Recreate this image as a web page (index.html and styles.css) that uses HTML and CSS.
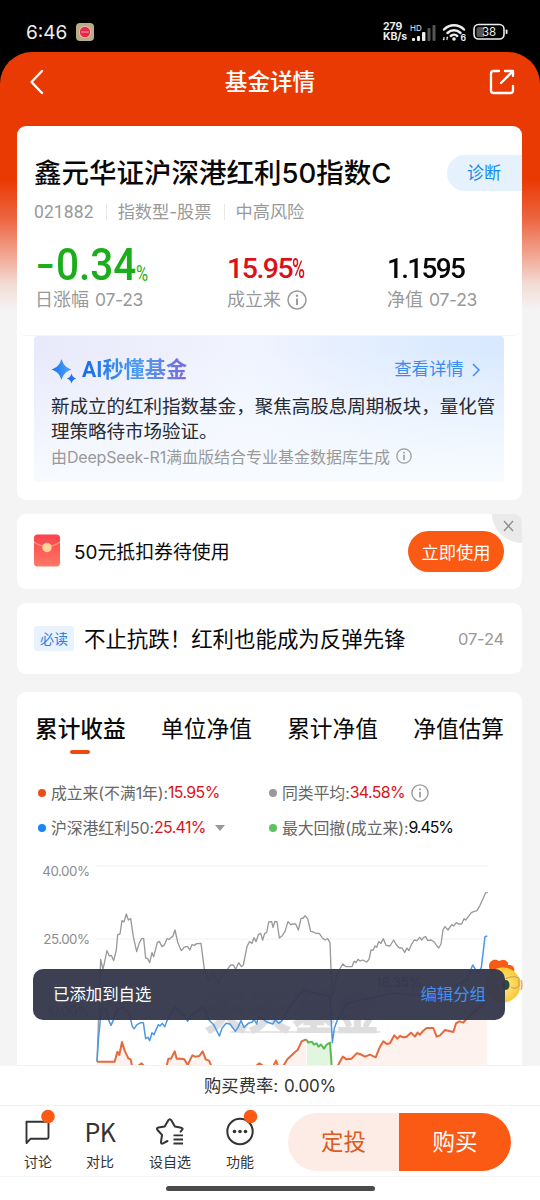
FILE: index.html
```html
<!DOCTYPE html>
<html lang="zh-CN">
<head>
<meta charset="utf-8">
<title>基金详情</title>
<link rel="stylesheet" href="styles.css">
</head>
<body>
<div class="status">
  <span class="clock">6:46</span>
  <svg class="app-icon" viewBox="0 0 18 18"><rect width="18" height="18" rx="4" fill="#b9ad85"/><circle cx="9" cy="9" r="6" fill="#f5c8b8"/><circle cx="9" cy="9" r="5.2" fill="#e8284a"/><path d="M5.5 9h7" stroke="#f39aa8" stroke-width="1.6" stroke-dasharray="1.4 .5"/></svg>
  <span class="speed"><span>279</span><span>KB/s</span></span>
  <svg class="signal" viewBox="0 0 26 20"><g fill="#eee"><rect x="2" y="14" width="3" height="3" rx="1"/><rect x="7" y="12" width="3" height="5" rx="1"/><rect x="12" y="8" width="3.4" height="9" rx="1"/></g><g fill="#555"><rect x="17.5" y="4" width="3" height="13" rx="1"/><rect x="22.5" y="1" width="3" height="16" rx="1"/></g><text x="0" y="7" class="hd">HD</text></svg>
  <svg class="wifi" viewBox="0 0 24 20"><g fill="none" stroke="#eee" stroke-width="2.5" stroke-linecap="round"><path d="M2 7.5a14 14 0 0 1 20 0"/><path d="M5.5 11a9.3 9.3 0 0 1 13 0"/><path d="M8.8 14a4.6 4.6 0 0 1 6.4 0"/></g><circle cx="12" cy="17" r="1.8" fill="#eee"/><path d="M2 15v3m0 0-1-1M5 18v-3m0 0 1 1" stroke="#eee" stroke-width="1.1"/><text x="18.5" y="18.5" class="six">6</text></svg>
  <svg class="battery" viewBox="0 0 36 18"><rect x="1" y="1.5" width="30" height="14.5" rx="4.5" fill="none" stroke="#eee" stroke-width="1.6"/><path d="M6 4h5v10H6a2.500 2.500 0 0 1-2.500-2.500v-5A2.500 2.500 0 0 1 6 4z" fill="#555"/><rect x="32.700" y="6.500" width="1.800" height="4.500" rx=".8" fill="#eee"/><text x="16" y="13" text-anchor="middle" class="bat">38</text></svg>
</div>
<div class="app">
  <header class="header">
    <svg class="back" viewBox="0 0 16 26"><path d="M13 2 2.500 13 13 24" fill="none" stroke="#fff" stroke-width="2.400" stroke-linecap="round" stroke-linejoin="round"/></svg>
    <h1>基金详情</h1>
    <svg class="share" viewBox="0 0 26 26"><path d="M10 2H4.500A2.500 2.500 0 0 0 2 4.500v17A2.500 2.500 0 0 0 4.500 24h17a2.500 2.500 0 0 0 2.500-2.500V17M16 2h8v5M24 2 12 14" fill="none" stroke="#fff" stroke-width="2.300" stroke-linecap="round" stroke-linejoin="round"/></svg>
  </header>
  <main class="main">
    <section class="card fund">
      <div class="summary">
        <div class="name-row"><h2>鑫元华证沪深港红利50指数C</h2><span class="diagnose">诊断</span></div>
        <div class="meta"><b>021882</b><i></i><span>指数型<em>-</em>股票</span><i></i><span>中高风险</span></div>
        <div class="stats">
          <div class="stat s1"><div class="big"><span class="dash">-</span><span class="digits">0.34</span><small>%</small></div><div class="label">日涨幅<span class="num">07-23</span></div></div>
          <div class="stat s2"><div class="value red">15.95<span class="pct">%</span></div><div class="label">成立来<svg class="info" viewBox="0 0 20 20"><use href="#info"/></svg></div></div>
          <div class="stat"><div class="value nav">1.1595</div><div class="label">净值<span class="num">07-23</span></div></div>
        </div>
      </div>
      <div class="ai">
        <div class="ai-head">
          <svg class="spark" viewBox="0 0 26 25"><defs><linearGradient id="sg" x1="0" x2="1"><stop stop-color="#1475ef"/><stop offset="1" stop-color="#53a4ff"/></linearGradient></defs><path d="M10.500 0C12.500 6 15 8.500 20.500 10.500 15 12.500 12.500 15 10.500 21 8.500 15 6 12.500 .5 10.500 6 8.500 8.500 6 10.500 0z" fill="url(#sg)"/><path d="M20.500 14.500c1 3.200 2 4 4.800 5-2.800 1-3.800 1.900-4.800 5-1-3.100-2-4-4.800-5 2.800-1 3.800-1.800 4.800-5z" fill="#2472ea"/></svg>
          <strong>AI秒懂基金</strong><span class="more">查看详情</span>
          <svg class="chev" viewBox="0 0 8 14"><path d="m1 1 6 6-6 6" fill="none" stroke="#3b8cf2" stroke-width="1.500"/></svg>
        </div>
        <p>新成立的红利指数基金，聚焦高股息周期板块，量化管<br>理策略待市场验证。</p>
        <div class="source"><span>由<span class="ds">DeepSeek-R1</span>满血版结合专业基金数据库生成</span><svg class="info" viewBox="0 0 20 20"><use href="#info"/></svg></div>
      </div>
    </section>
    <section class="card coupon">
      <svg class="packet" viewBox="0 0 26 33"><defs><linearGradient id="pg" x2="0" y2="1"><stop stop-color="#fb414d"/><stop offset="1" stop-color="#ff7864"/></linearGradient></defs><rect y=".5" width="26" height="32" rx="3.500" fill="url(#pg)"/><path d="M0 8q13 9 26 0" fill="none" stroke="#ff9b7c" stroke-width="1.200"/><circle cx="13" cy="13.500" r="4.700" fill="#ffd596"/></svg>
      <span class="coupon-text">50元抵扣券待使用</span>
      <button>立即使用</button>
      <svg class="close" viewBox="0 0 30 29"><path d="M0 0h22a8 8 0 0 1 8 8v21C14 29 0 16 0 0z" fill="#eaeaea"/><path d="m12 7 9 10M21 7l-9 10" stroke="#8c8c8c" stroke-width="1.300"/></svg>
    </section>
    <section class="card article"><span class="tag">必读</span><span class="headline">不止抗跌！红利也能成为反弹先锋</span><time>07-24</time></section>
    <section class="card perf">
      <nav class="tabs"><span class="on">累计收益</span><span>单位净值</span><span>累计净值</span><span>净值估算</span></nav>
      <div class="legend">
        <div><i class="dot or"></i>成立来(不满1年):<b class="red">15.95%</b></div>
        <div><i class="dot gy"></i>同类平均:<b class="red">34.58%</b><svg class="info" viewBox="0 0 20 20"><use href="#info"/></svg></div>
        <div><i class="dot bl"></i>沪深港红利50:<b class="red">25.41%</b><i class="caret"></i></div>
        <div><i class="dot gn"></i>最大回撤(成立来):<b>9.45%</b></div>
      </div>
      <svg class="chart" viewBox="51 0 1515 645">
        <path d="M288 48H1462M288 267H1462M288 486H1462" stroke="#f0f0f0" stroke-width="3"/>
        <text class="axis" x="127" y="78" textLength="143">40.00%</text>
        <text class="axis" x="130" y="281" textLength="140">25.00%</text>
        <text class="axis" x="138" y="498" textLength="132">10.00%</text>
        <text class="mark" x="612" y="536" textLength="526" lengthAdjust="spacingAndGlyphs">天天基金</text>
        <path d="M690 546H1140" stroke="#dedede" stroke-width="5"/>
        <text class="axis dark" x="1128" y="412" textLength="138">16.35%</text>
        <path class="fill-or" d="M291 635H344L366 576 396 645H291zM500 645 524 604 553 628 563 645 608 604 634 645zM850 645 885 606 918 568V645zM1013 645 1028 620 1070 610 1127 622 1150 574 1183 556 1233 548 1300 534 1310 560 1335 540 1360 546 1368 520 1400 506 1462 450V645z"/>
        <path class="fill-gn" d="M921 568 942 584 972 596 993 578V645H921z"/>
        <path class="line gray" d="M291 635 302 328 309 358 321 302 328 318 334 316 341 332 349 300 353 254 360 252 366 212 372 216 379 192 385 210 392 206 400 260 410 305 418 278 425 266 431 266 437 324 443 326 449 338 456 308 461 320 472 278 478 274 486 290 493 285 501 266 508 268 513 262 518 260 525 240 534 280 544 302 552 292 558 290 563 290 569 300 576 284 583 286 590 281 603 280 613 358 625 390 640 370 655 400 668 370 684 356 692 345 700 345 707 358 716 338 724 350 730 345 741 290 748 275 756 280 762 263 768 275 775 254 782 250 788 270 794 250 800 248 806 216 815 215 819 232 825 214 831 216 838 264 846 258 855 244 864 215 872 224 878 222 887 222 895 240 903 206 910 204 915 197 923 206 932 244 940 246 948 250 958 250 967 264 975 270 983 266 990 278 993 358 997 440 1010 380 1022 352 1029 342 1038 350 1056 350 1062 334 1068 338 1074 328 1080 333 1088 330 1100 336 1107 328 1113 300 1120 300 1125 288 1130 292 1136 275 1143 280 1150 266 1158 286 1170 288 1181 270 1190 286 1198 294 1206 294 1214 307 1221 294 1226 302 1234 284 1243 270 1251 272 1259 262 1265 270 1271 262 1277 260 1283 272 1293 270 1303 276 1308 284 1316 294 1323 282 1329 240 1335 230 1344 240 1355 224 1361 228 1369 218 1376 222 1385 222 1392 206 1397 210 1408 196 1414 188 1423 184 1431 182 1440 166 1457 128 1463 128"/>
        <path class="line blue" d="M291 635 296 560 305 470 318 478 325 508 333 526 341 508 350 480 370 470 388 490 397 530 403 536 411 524 422 518 430 518 437 566 444 562 449 572 456 548 462 554 475 524 480 528 487 520 494 530 502 510 525 470 545 490 556 500 563 514 569 500 610 470 627 510 641 524 658 558 666 535 678 520 690 522 706 544 714 532 723 512 732 532 745 520 757 516 762 508 770 522 775 500 790 508 800 516 812 520 818 522 826 510 836 520 846 512 870 470 910 420 990 440 997 578 1003 535 1012 510 1040 460 1180 430 1300 440 1400 390 1418 345 1425 356 1435 370 1444 352 1455 260 1462 258"/>
        <path class="line orange" d="M291 635H344L352 605 358 615 366 576 374 602 385 625 392 628 396 648M414 648 425 640 432 648M500 648 505 626 513 626 524 604 530 626 540 626 553 628 563 645 577 616 585 620 598 618 608 604 617 628 627 632 634 648M768 648 778 640 790 648M820 648 828 632 834 648M850 648 862 628 885 606 893 600 905 574 918 568M1013 648 1028 620 1040 628 1055 626 1070 610 1080 612 1095 620 1110 614 1127 622 1140 590 1150 574 1160 582 1170 580 1183 556 1192 566 1200 558 1210 562 1220 560 1233 548 1245 560 1253 548 1260 554 1270 542 1280 534 1300 534 1310 560 1320 556 1335 540 1360 546 1368 520 1378 514 1390 518 1400 506 1430 480 1462 450"/>
        <path class="line green" d="M918 568 925 578 935 575 942 584 950 580 955 590 963 584 972 596 980 584 990 578 995 648"/>
      </svg>
    </section>
  </main>
  <footer class="footer">
    <div class="fee">购买费率: <span>0.00%</span></div>
    <div class="actions">
      <div class="act a1"><svg viewBox="0 0 34 34"><path d="M5.500 8.700h20.500q1.500 0 1.500 1.500v14q0 1.500-1.500 1.500H9.700L5.500 30z" fill="none" stroke="#333" stroke-width="1.900" stroke-linejoin="round"/><circle cx="27" cy="3.500" r="6.800" fill="#fa5a14"/></svg><span>讨论</span></div>
      <div class="act a2"><div class="pk">PK</div><span>对比</span></div>
      <div class="act a3"><svg viewBox="0 0 34 34"><path d="M10 30.400q-2.200 1-2-1.500l1-7L4.500 17q-1.500-2 1-2.500l6.200-1 3.600-6.200q1.500-2.200 3 0l3.600 6.200 6.300 1.200q2.400.6.700 2.500l-1.300 1.500M10 30.400l4.500-2.400" fill="none" stroke="#333" stroke-width="2" stroke-linecap="round" stroke-linejoin="round"/><path d="M20.500 22.300H30M20.500 26.500H30M20.500 30.500H30" stroke="#333" stroke-width="1.800"/></svg><span>设自选</span></div>
      <div class="act a4"><svg viewBox="0 0 34 34"><circle cx="17" cy="18.500" r="12.700" fill="none" stroke="#333" stroke-width="2"/><g fill="#333"><circle cx="11.500" cy="18.500" r="1.800"/><circle cx="17" cy="18.500" r="1.800"/><circle cx="22.500" cy="18.500" r="1.800"/></g><circle cx="27.500" cy="3.500" r="6.800" fill="#fa5a14"/></svg><span>功能</span></div>
      <div class="trade"><span>定投</span><span>购买</span></div>
    </div>
    <div class="home"><i></i></div>
  </footer>
</div>
<svg class="mascot" viewBox="0 0 46 54"><defs><radialGradient id="mg"><stop stop-color="#ffed9a"/><stop offset="1" stop-color="#fac936"/></radialGradient></defs><path d="M8 18C2 7 11 2 16 6c6-3 10 1 9 4 7-1 8 6 4 10z" fill="#f45c17"/><circle cx="20" cy="30" r="17.500" fill="url(#mg)"/><ellipse cx="23" cy="30" rx="3.500" ry="5" fill="#284f35"/><path d="M22 24q8-4 14-1v8q-4 4-8 1" fill="none" stroke="#c79a4a" stroke-width="1"/><path d="M38 25q2 5 0 10" fill="none" stroke="#f5a070" stroke-width="1.500"/></svg>
<div class="toast"><span>已添加到自选</span><span>编辑分组</span></div>
<svg class="symbols"><symbol id="info" viewBox="0 0 20 20"><circle cx="10" cy="10" r="9" fill="none" stroke="currentColor" stroke-width="1.500"/><path d="M10 8.500V15" stroke="currentColor" stroke-width="1.900"/><circle cx="10" cy="5.800" r="1.200" fill="currentColor"/></symbol></svg>
</body>
</html>
```
FILE: styles.css
```css
* { box-sizing: border-box; }
body { margin: 0; width: 540px; height: 1200px; overflow: hidden; position: relative; background: #000; color: #080808; font-family: Inter, "Noto Sans CJK SC", sans-serif; white-space: nowrap; }
h1, h2, p { margin: 0; font-weight: 500; }
svg { display: block; flex: none; }
i, em { font-style: normal; }
.symbols { position: absolute; width: 0; height: 0; }
.red { color: #dc1118; }

.status { height: 52px; display: flex; align-items: center; padding: 12px 31px 0 26px; color: #eee; }
.clock { font-size: 19px; letter-spacing: 0; width: 50px; }
.app-icon { width: 18px; height: 18px; }
.speed { margin-left: auto; width: 27px; font-size: 10.5px; line-height: 10px; font-weight: 700; display: flex; flex-direction: column; letter-spacing: -.1px; }
.signal { width: 26px; height: 20px; margin-top: 3px; }
.hd { font-size: 8px; fill: #eee; }
.wifi { width: 24px; height: 20px; margin-left: 6px; }
.six { font-size: 8.500px; font-weight: 700; fill: #eee; }
.battery { width: 36px; height: 18px; margin-left: 7px; }
.bat { font-size: 11.500px; fill: #eee; }

.app { height: 1148px; border-radius: 32px 32px 0 0; overflow: hidden; display: flex; flex-direction: column; background: linear-gradient(#ea3a04 0, #ea3a04 128px, #ec6440 166px, #f1a48f 202px, #f3dbd5 232px, #f4f4f4 258px); }
.header { height: 74px; flex: none; display: flex; align-items: center; justify-content: space-between; padding: 0 25px 15px 29px; color: #fff; }
.back { width: 16px; height: 26px; }
.share { width: 26px; height: 26px; }
.header h1 { font-size: 22.600px; line-height: 30px; margin-left: 6px; }
.main { flex: 1; min-height: 0; overflow: hidden; padding: 0 18px 0 17px; display: flex; flex-direction: column; }
.card { background: #fff; border-radius: 9px; flex: none; }

.fund { height: 374px; margin-bottom: 14px; overflow: hidden; }
.summary { height: 210px; padding-top: 29px; border-bottom: 1px solid #f5f5f5; border-radius: 9px; }
.name-row { display: flex; height: 36px; align-items: center; justify-content: space-between; padding-left: 17px; }
.name-row h2 { font-size: 27.500px; line-height: 36px; }
.diagnose { width: 75px; height: 36px; border-radius: 18px 0 0 18px; background: #e5f2fe; color: #1688f0; font-size: 17px; line-height: 37px; padding-left: 20px; }
.meta { margin: 10px 0 0 17px; height: 22px; display: flex; align-items: center; color: #999; font-size: 17.200px; line-height: 22px; }
.meta b { font-family: Roboto, sans-serif; font-size: 17.500px; font-weight: 400; letter-spacing: .1px; }
.meta i { width: 1px; height: 16px; background: #e8e8e8; margin: 0 11px 0 12px; }
.stats { display: flex; margin: 20px 0 0 18px; }
.stat { height: 70px; }
.s1 { width: 192px; }
.s2 { width: 160px; }
.big { height: 45px; display: flex; color: #1cad1c; font: 500 45px/44px Roboto, sans-serif; }
.dash { font: 500 44px/43px Inter, sans-serif; width: 21px; }
.digits { width: 79px; transform: scaleX(.9); transform-origin: left; }
.big small { font-size: 22px; font-weight: 400; transform: translate(1px, 9px) scaleX(.75); transform-origin: left; }
.value { height: 45px; font: 500 28.500px/51px Roboto, sans-serif; letter-spacing: -1.500px; }
.nav { letter-spacing: -2px; transform: scaleX(.98); transform-origin: left; }
.nav { letter-spacing: -1.700px; }
.pct { display: inline-block; transform: scaleX(.62); transform-origin: left; }
.label { height: 24px; line-height: 24px; font-size: 18px; color: #999; display: flex; align-items: center; gap: 6px; }
.num { font-size: 17.500px; letter-spacing: -.3px; }
.label .info { width: 20px; height: 20px; }

.ai { width: 470px; height: 146px; margin: 0 0 0 17px; border-radius: 4px; padding: 21px 0 0 17px; background: linear-gradient(to bottom, transparent 10%, #f7fbff 100%), radial-gradient(circle at 100% 0, #d8e8fe, transparent 52%), linear-gradient(90deg, #e8e9fa, #f1f4fe 45%, #e8f2ff); }
.ai-head { height: 26px; display: flex; align-items: center; }
.spark { width: 26px; height: 25px; margin-top: 3px; }
.ai-head strong { margin-left: 5px; font-size: 21.200px; font-family: Roboto, "Noto Sans CJK SC", sans-serif; line-height: 26px; background: linear-gradient(90deg, #126de7, #4f9cf2 55%, #7a69da); -webkit-background-clip: text; background-clip: text; color: transparent; }
.more { margin-left: 207px; font-size: 17.400px; line-height: 24px; margin-top: -2px; color: #3b8cf2; }
.chev { width: 8px; height: 14px; margin-left: 8px; }
.ai p { margin-top: 11px; font-size: 18.520px; line-height: 24.500px; font-weight: 400; color: #252a33; }
.source { margin-top: 2px; height: 22px; display: flex; align-items: center; gap: 6px; color: #999; font-size: 16px; }
.source .info { width: 16px; height: 16px; }
.ds { letter-spacing: -.2px; }

.coupon { height: 75px; margin-bottom: 14px; display: flex; align-items: center; padding: 0 18px 0 17px; position: relative; }
.packet { width: 26px; height: 33px; margin-top: -2px; }
.coupon-text { margin: -2px auto 0 14px; font-size: 18.900px; }
.coupon button { width: 96px; height: 41px; padding: 0 0 1px; border: 0; border-radius: 21px; background: #fa5a14; color: #fff; font: inherit; font-size: 17.300px; }
.close { position: absolute; right: 0; top: 0; width: 30px; height: 29px; }

.article { height: 71px; margin-bottom: 18px; display: flex; align-items: center; padding: 0 18px 0 17px; }
.tag { width: 40px; height: 25px; background: #e9f2ff; border-radius: 3px; color: #2d80e5; font-size: 14px; line-height: 25px; text-align: center; }
.headline { margin-left: 10px; margin-top: -2px; font-size: 21.450px; }
.article time { margin-left: auto; color: #999; font-size: 16.500px; letter-spacing: -.2px; }

.perf { height: 400px; }
.tabs { display: flex; justify-content: space-between; padding: 20px 18px 0 18px; height: 83px; }
.tabs span { font-size: 22.700px; line-height: 33px; }
.tabs .on { font-weight: 500; display: flex; flex-direction: column; align-items: center; }
.tabs .on::after { content: ""; width: 20px; height: 4px; border-radius: 2px; background: #ee4a10; margin-top: 5px; }
.legend { display: grid; grid-template-columns: 231px 1fr; grid-auto-rows: 35px; padding-left: 21px; font-size: 15.900px; color: #666; height: 75px; }
.legend div { display: flex; align-items: center; letter-spacing: -.1px; }
.legend b { font-weight: 400; letter-spacing: -.6px; }
.legend b:not(.red) { color: #080808; letter-spacing: -1px; }
.dot { width: 8px; height: 8px; border-radius: 50%; margin-right: 5px; }
.or { background: #e84f16; }
.gy { background: #999; }
.bl { background: #1688f0; }
.gn { background: #5dc260; }
.legend .info { width: 18px; height: 18px; margin-left: 6px; color: #999; }
.caret { border: 5px solid transparent; border-top: 6px solid #999; border-bottom: 0; margin-left: 9px; }
.chart { width: 505px; height: 215px; }
.axis { font-size: 40px; fill: #8c8c8c; }
.dark { fill: #555; }
.mark { font-size: 140px; font-weight: 900; fill: #dedede; }
.line { fill: none; stroke-width: 4; stroke-linejoin: round; }
.gray { stroke: #999; }
.blue { stroke: #4e98e2; stroke-width: 4.500; }
.orange { stroke: #e5693d; stroke-width: 6; }
.green { stroke: #58b951; stroke-width: 6; }
.fill-or { fill: #fdf2ee; }
.fill-gn { fill: #e1f5df; }

.footer { height: 135px; flex: none; background: #fff; color: #333; }
.fee { height: 41px; line-height: 40px; text-align: center; font-size: 17.300px; border-top: 1px solid #f3f3f3; border-bottom: 1px solid #f0f0f0; }
.fee span { font-size: 17px; letter-spacing: -.2px; margin-left: 1px; }
.actions { height: 71px; display: flex; align-items: flex-start; padding-top: 7px; border-bottom: 1px solid #f5f5f5; }
.act { display: flex; flex-direction: column; align-items: center; font-size: 14px; line-height: 20px; width: 62px; }
.act svg { width: 34px; height: 34px; overflow: visible; margin-bottom: 5px; }
.pk { height: 39px; line-height: 37px; font-family: "Noto Sans CJK SC", sans-serif; font-size: 25px; letter-spacing: -.5px; }
.a1 { margin-left: 7px; }
.a3 { width: 78px; }
.a4 { margin-right: 17px; }
.trade { display: flex; width: 223px; height: 58px; border-radius: 29px; overflow: hidden; font-size: 22.500px; line-height: 58px; text-align: center; }
.trade span { width: 111px; background: #fdece6; color: #dc5b22; }
.trade span + span { width: 112px; background: #fa5a14; color: #fff; }
.home { padding: 9px 0 0 166px; }
.home i { display: block; width: 209px; height: 5px; border-radius: 3px; background: #4a4a4a; }

.mascot { position: absolute; left: 483px; top: 955px; width: 46px; height: 54px; }
.toast { position: absolute; left: 33px; top: 969px; width: 472px; height: 51px; border-radius: 10px; background: rgba(53, 55, 76, .96); display: flex; align-items: center; justify-content: space-between; padding: 0 19px 3px 20px; font-size: 16.400px; color: #fff; }
.toast span + span { color: #4390ec; }
```
